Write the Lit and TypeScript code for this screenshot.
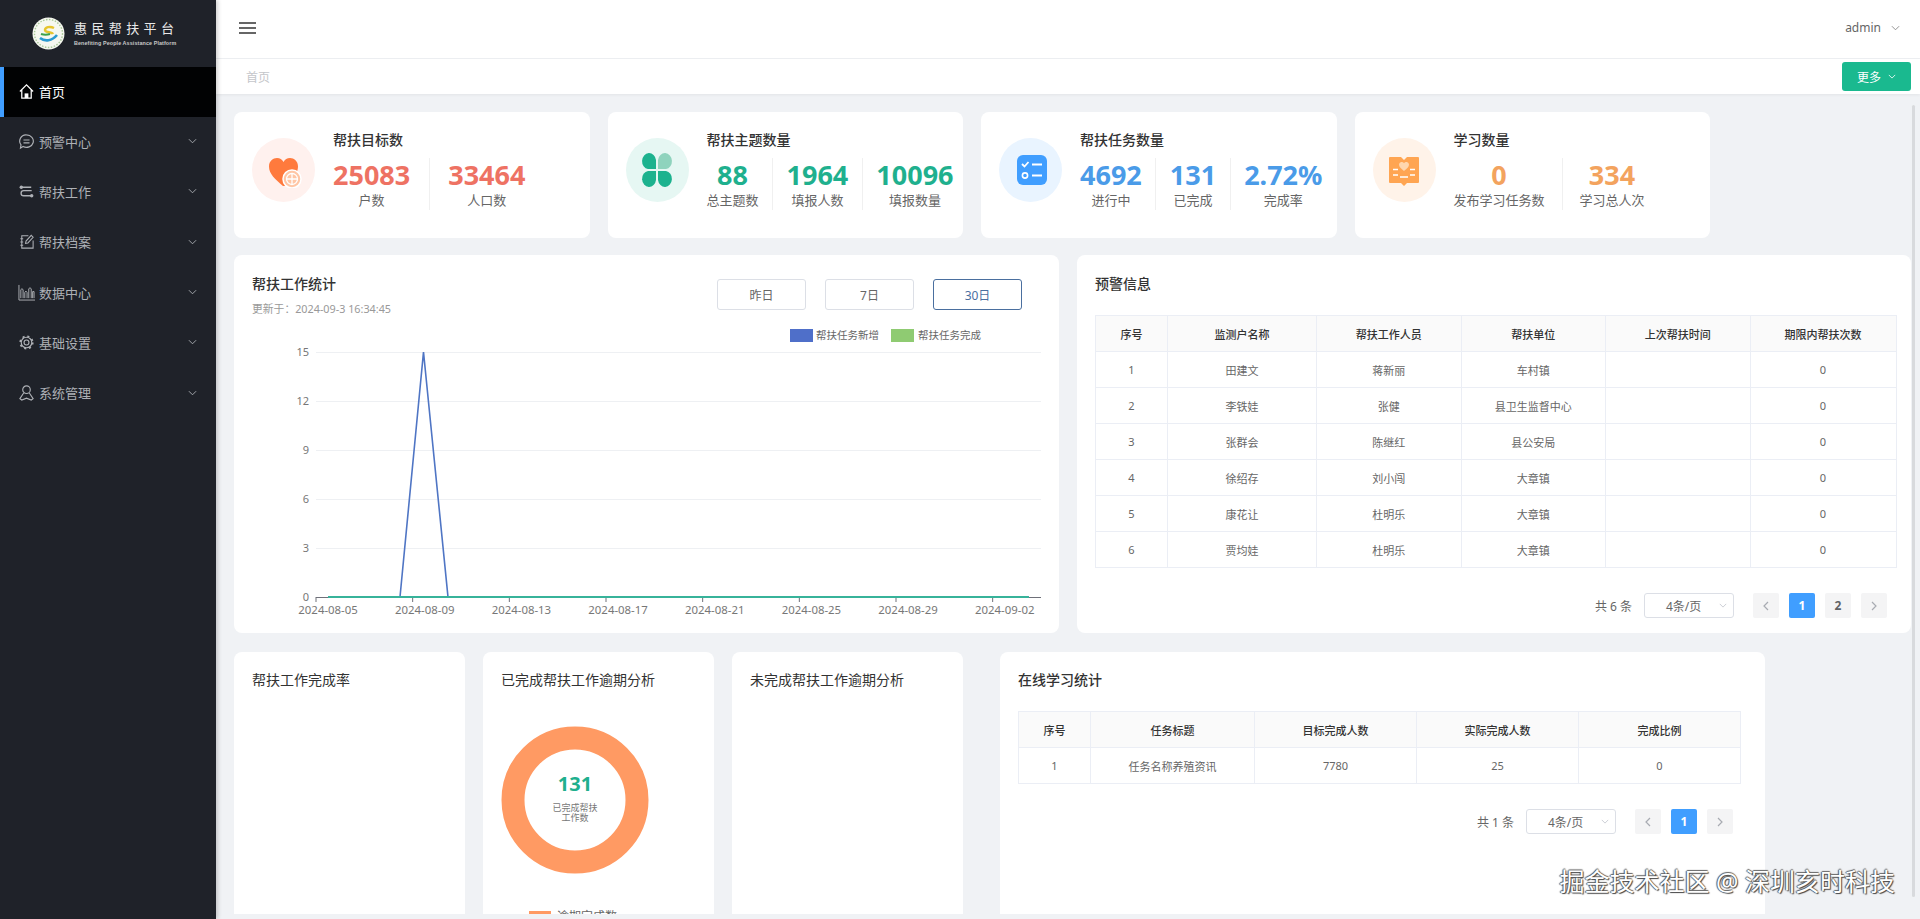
import { LitElement, css, html, svg } from 'lit';
import { customElement } from 'lit/decorators.js';

const chevron = html`<svg class="chev" viewBox="0 0 10 6"><path d="M1 1l4 4 4-4" fill="none" stroke="currentColor" stroke-width="1"/></svg>`;

const menuIcons: Record<string, unknown> = {
  home: svg`<path d="M2 9L9 2l7 7M4 7.500V16h10V7.500" fill="none" stroke="currentColor" stroke-width="1.300"/><rect x="7" y="11" width="4" height="5" fill="currentColor"/>`,
  chat: svg`<path d="M9 2a7.200 6.600 0 1 1-3.600 12.300L2.600 16l.6-3.400A6.600 6.600 0 0 1 9 2z" fill="none" stroke="currentColor" stroke-width="1.200"/><path d="M5.800 7.400h6.400M5.800 10.400h6.400" stroke="currentColor" stroke-width="1.200"/>`,
  flow: svg`<path d="M4 4.500h10M14.500 8H6a2.600 2.600 0 0 0 0 5.500h8" fill="none" stroke="currentColor" stroke-width="1.400"/><circle cx="3.500" cy="4.500" r="1.800" fill="currentColor"/><circle cx="14.500" cy="13.500" r="1.800" fill="currentColor"/>`,
  edit: svg`<path d="M11 3H4v13h12V8M2.500 6h3M2.500 9.500h3M2.500 13h3" fill="none" stroke="currentColor" stroke-width="1.100"/><path d="M8 11l.5-2.500L14 2.500l2 2-5.500 6z" fill="none" stroke="currentColor" stroke-width="1.100"/>`,
  bars: svg`<path d="M1 1v16h17" fill="none" stroke="currentColor" stroke-width="1"/><path d="M3 15V6q1.200-2 2.400 0v9M7.200 15V9q1.200-3 2.400 0v6M11.400 15V5q1.300-2 2.600 0v10M15.500 15V8h1.500v7" fill="none" stroke="currentColor" stroke-width="1"/>`,
  gear: svg`<circle cx="9" cy="9" r="2.600" fill="none" stroke="currentColor" stroke-width="1.200"/><circle cx="9" cy="9" r="5.600" fill="none" stroke="currentColor" stroke-width="1.200"/><circle cx="9" cy="9" r="6.600" fill="none" stroke="currentColor" stroke-width="1.800" stroke-dasharray="2.200 3"/>`,
  user: svg`<circle cx="9" cy="6" r="4" fill="none" stroke="currentColor" stroke-width="1.200"/><path d="M6 9.500L2 15.500l2 1.500 5-2 5 2 2-1.500-4-6" fill="none" stroke="currentColor" stroke-width="1.200"/>`,
};

const menu = [
  { icon: 'home', label: '首页', active: true },
  { icon: 'chat', label: '预警中心' },
  { icon: 'flow', label: '帮扶工作' },
  { icon: 'edit', label: '帮扶档案' },
  { icon: 'bars', label: '数据中心' },
  { icon: 'gear', label: '基础设置' },
  { icon: 'user', label: '系统管理' },
];

const statIcons: Record<string, unknown> = {
  heart: svg`<path d="M17 34C9 27 3 22 3 14.500 3 9 7 6 11 6c3 0 5 1.500 6.500 4C19 7.500 21 6 24 6c4 0 8 3 8 8.500 0 3-1 5-2 7L20 34z" fill="#ff7a3d"/><circle cx="26" cy="27" r="9" fill="#ffc6a5" stroke="#fff" stroke-width="1.500"/><circle cx="26" cy="27" r="5.500" fill="none" stroke="#fff" stroke-width="1.300"/><path d="M26 21.500v11M20.500 27h11" stroke="#fff" stroke-width="1.300"/>`,
  clover: svg`<path d="M17 17H9a7 8 0 1 1 8-9z" fill="#1cb28e"/><path d="M19 17h8a7 8 0 1 0-8-9z" fill="#8fd3bd"/><path d="M17 19H9a7 8 0 1 0 8 9z" fill="#1cb28e"/><path d="M19 19h8a7 8 0 1 1-8 9z" fill="#1cb28e"/>`,
  list: svg`<rect x="4" y="3" width="30" height="30" rx="6" fill="#409eff"/><path d="M9 12l2.500 2.500 4-4.500" fill="none" stroke="#fff" stroke-width="1.800"/><path d="M19 12.500h10M19 23.500h10" stroke="#fff" stroke-width="2"/><circle cx="12" cy="23.500" r="2.600" fill="none" stroke="#fff" stroke-width="1.600"/>`,
  book: svg`<path d="M4 5h11l3 3 3-3h11a1 1 0 0 1 1 1v24a1 1 0 0 1-1 1H21l-3 3-3-3H4a1 1 0 0 1-1-1V6a1 1 0 0 1 1-1z" fill="#ffa552"/><path d="M18 19c-3-2.500-5-4-5-6.500a2.700 2.700 0 0 1 5-1.300 2.700 2.700 0 0 1 5 1.300c0 2.500-2 4-5 6.500z" fill="#ffd7ae"/><path d="M7 17.500h5M7 23h5M24 17.500h5M24 23h5M14 25h8" stroke="#fff" stroke-width="1.600"/>`,
};

const stats = [
  { icon: 'heart', tint: 'red', title: '帮扶目标数', pad: 'p18', items: [['25083', '户数'], ['33464', '人口数']] },
  { icon: 'clover', tint: 'green', title: '帮扶主题数量', pad: 'p13', items: [['88', '总主题数'], ['1964', '填报人数'], ['10096', '填报数量']] },
  { icon: 'list', tint: 'blue', title: '帮扶任务数量', pad: 'p13', items: [['4692', '进行中'], ['131', '已完成'], ['2.72%', '完成率']] },
  { icon: 'book', tint: 'orange', title: '学习数量', pad: 'p17', items: [['0', '发布学习任务数'], ['334', '学习总人次']] },
];

const warnCols = [72, 149, 144.5, 144.5, 144.5, 146];
const warnHead = ['序号', '监测户名称', '帮扶工作人员', '帮扶单位', '上次帮扶时间', '期限内帮扶次数'];
const warnRows = [
  ['1', '田建文', '蒋新丽', '车村镇', '', '0'],
  ['2', '李铁娃', '张健', '县卫生监督中心', '', '0'],
  ['3', '张群会', '陈继红', '县公安局', '', '0'],
  ['4', '徐绍存', '刘小闯', '大章镇', '', '0'],
  ['5', '康花让', '杜明乐', '大章镇', '', '0'],
  ['6', '贾均娃', '杜明乐', '大章镇', '', '0'],
];

const studyCols = [72, 164, 162, 162, 162];
const studyHead = ['序号', '任务标题', '目标完成人数', '实际完成人数', '完成比例'];
const studyRows = [['1', '任务名称养殖资讯', '7780', '25', '0']];

const dates = ['2024-08-05', '2024-08-09', '2024-08-13', '2024-08-17', '2024-08-21', '2024-08-25', '2024-08-29', '2024-09-02'];

@customElement('app-root')
export class AppRoot extends LitElement {
  static styles = css`
    :host {
      display: block;
      width: 1920px;
      height: 919px;
      overflow: hidden;
      font-family: "Noto Sans", "Noto Sans CJK SC", sans-serif;
      font-size: 12px;
      color: #666;
      background: #f0f2f5;
    }
    .layout { display: flex; height: 919px; }

    .side { width: 216px; flex: none; background: #1f2229; box-shadow: 2px 0 4px rgba(0, 0, 0, .18); z-index: 2; }
    .logo { height: 67px; display: flex; align-items: center; padding-left: 32px; gap: 9px; box-sizing: border-box; }
    .logo svg { width: 33px; height: 33px; flex: none; }
    .logo_cn { color: #e8e8e8; font-size: 13px; line-height: 15px; letter-spacing: 4.4px; white-space: nowrap; }
    .logo_en { color: #c8c8c8; font-size: 5.4px; line-height: 8px; margin-top: 3px; white-space: nowrap; font-family: "Liberation Sans", sans-serif; font-weight: 700; letter-spacing: .1px; }
    .item { height: 50.3px; display: flex; align-items: center; padding: 0 0 2px 18px; color: #aeb1b6; font-size: 13px; box-sizing: border-box; }
    .item.active { background: #010203; color: #fff; border-left: 4px solid #409eff; padding-left: 14px; height: 50px; }
    .item svg.icon { width: 17px; height: 17px; margin-right: 4px; flex: none; }
    .item .chev { width: 9px; height: 6px; margin-left: auto; margin-right: 19px; }

    .main { flex: 1; display: flex; flex-direction: column; min-width: 0; position: relative; }
    .top { height: 55px; flex: none; background: #fff; border-bottom: 1px solid #eef0f3; display: flex; align-items: center; padding: 0 20px 3px 23px; box-sizing: content-box; }
    .burger { width: 17px; height: 12px; border-top: 2px solid #666; border-bottom: 2px solid #666; position: relative; box-sizing: border-box; }
    .burger::after { content: ''; position: absolute; left: 0; right: 0; top: 3px; height: 2px; background: #666; }
    .user { margin-left: auto; display: flex; align-items: center; gap: 10px; font-size: 12px; color: #666; }
    .user .chev { width: 9px; height: 6px; color: #888; }
    .crumbs { height: 35px; flex: none; background: #fff; box-shadow: 0 1px 3px rgba(0, 0, 0, .06); display: flex; align-items: center; padding: 0 9px 0 30px; color: #c4c6ca; z-index: 1; box-sizing: border-box; }
    .more { margin-left: auto; width: 69px; height: 29px; background: #1ab98f; color: #fff; border-radius: 3px; display: flex; align-items: center; justify-content: center; gap: 7px; font-size: 12px; }
    .more .chev { width: 8px; height: 5px; }

    .content { height: 820px; flex: none; overflow: hidden; padding: 18px 0 0 18px; box-sizing: border-box; display: flex; flex-direction: column; gap: 17px; }
    .row { display: flex; gap: 18px; flex: none; }
    .card { background: #fff; border-radius: 8px; flex: none; box-sizing: border-box; }

    .stat { width: 355.5px; height: 126px; display: flex; padding: 18px 0 0 18px; }
    .stat_icon { width: 63px; height: 64px; border-radius: 50%; flex: none; margin: 8px 18px 0 0; display: flex; align-items: center; justify-content: center; }
    .stat_icon svg { width: 36px; height: 36px; }
    .red { background: #fff1ee; }
    .green { background: #e6f7f3; }
    .blue { background: #e9f4ff; }
    .orange { background: #fff3e9; }
    .stat_title { font-size: 14px; font-weight: 500; line-height: 20px; color: #333; }
    .nums { display: flex; margin-top: 8px; }
    .num_col { display: flex; flex-direction: column; align-items: center; height: 52px; border-right: 1px solid #f0f0f0; }
    .num_col:first-child { padding-left: 0 !important; }
    .num_col:last-child { border-right: 0; }
    .p18 .num_col { padding: 0 18.5px; }
    .p13 .num_col { padding: 0 13.5px; }
    .p17 .num_col { padding: 0 17px; }
    .num { font-size: 27px; line-height: 34px; font-weight: 700; }
    .num.c-red { color: #ee7263; }
    .num.c-green { color: #1fb08e; }
    .num.c-blue { color: #4a9be8; }
    .num.c-orange { color: #f3a35e; }
    .num_label { font-size: 13px; line-height: 16px; color: #666; white-space: nowrap; }

    .chart { width: 825px; height: 378px; padding: 0; }
    .chart_head { display: flex; height: 65px; padding: 19px 37px 0 18px; box-sizing: border-box; }
    .card_title { font-size: 14px; font-weight: 500; color: #333; line-height: 20px; }
    .updated { font-size: 10.8px; color: #999; margin-top: 8px; line-height: 14px; }
    .ranges { margin-left: auto; display: flex; gap: 19px; margin-top: 5px; }
    .range { width: 89px; height: 31px; border: 1px solid #dcdfe6; border-radius: 3px; display: flex; align-items: center; justify-content: center; font-size: 12px; color: #666; box-sizing: border-box; }
    .range.on { border-color: #4a6f9f; color: #4a6f9f; }
    .chart svg { display: block; width: 825px; height: 305px; }
    .chart svg text { font-family: "Noto Sans", "Noto Sans CJK SC", sans-serif; }

    .warn { width: 834px; height: 378px; padding: 19px 16px 0 18px; }
    .table_title { font-size: 14px; font-weight: 500; color: #333; line-height: 20px; margin-bottom: 21px; }
    .table { display: grid; border: 1px solid #ebeef5; border-width: 1px 0 0 1px; width: max-content; font-size: 11px; }
    .cell { height: 36px; display: flex; align-items: center; justify-content: center; border: 1px solid #ebeef5; border-width: 0 1px 1px 0; box-sizing: border-box; color: #666; }
    .cell.head { background: #fafafa; color: #333; font-weight: 500; }
    .pager { display: flex; align-items: center; justify-content: flex-end; margin-top: 25px; padding-right: 8px; height: 25px; font-size: 12px; color: #666; }
    .total { margin-right: 12px; }
    .size { width: 90px; height: 25px; border: 1px solid #dcdfe6; border-radius: 3px; display: flex; align-items: center; padding: 0 6px 0 21px; box-sizing: border-box; margin-right: 19px; }
    .size .chev { width: 8px; height: 5px; margin-left: auto; color: #c0c4cc; }
    .pg { width: 26px; height: 25px; background: #f4f4f5; border-radius: 2px; margin-left: 10px; display: flex; align-items: center; justify-content: center; font-weight: 700; color: #606266; }
    .size + .pg { margin-left: 0; }
    .pg.on { background: #409eff; color: #fff; }
    .pg svg { width: 6px; height: 10px; color: #a8abb2; }

    .bottom { height: 300px; margin-top: 2px; }
    .mini { width: 231px; height: 300px; padding: 18px 0 0 18px; }
    .mini_title { font-size: 14px; line-height: 20px; color: #333; }
    .donut_gap { height: 18px; }
    .mini svg { display: block; width: 190px; height: 230px; margin-left: -2px; }
    .mini svg text { font-family: "Noto Sans", "Noto Sans CJK SC", sans-serif; }
    .study { width: 765px; height: 300px; padding: 18px 24px 0 18px; margin-left: 19px; }
    .study .pager { margin-top: 25px; padding-right: 8px; }

    .scroll { position: absolute; right: 5px; top: 105px; width: 3px; height: 792px; background: #d8dadd; border-radius: 2px; }
    .mark { position: absolute; right: 25px; bottom: 24px; font-size: 25px; line-height: 28px; color: #fff; white-space: nowrap; text-shadow: 1px 1px 1px #444, -1px 0 1px #555, 0 -1px 1px #666; z-index: 3; }
  `;

  private renderTable(cols: number[], head: string[], rows: string[][]) {
    const tpl = cols.map((w) => `${w}px`).join(' ');
    return html`<div class="table" style="grid-template-columns:${tpl}">
      ${head.map((h) => html`<div class="cell head">${h}</div>`)}
      ${rows.map((r) => r.map((c) => html`<div class="cell">${c}</div>`))}
    </div>`;
  }

  private renderPager(total: number, pages: number[]) {
    const left = svg`<path d="M5 1L1 5l4 4" fill="none" stroke="currentColor" stroke-width="1.200"/>`;
    const right = svg`<path d="M1 1l4 4-4 4" fill="none" stroke="currentColor" stroke-width="1.200"/>`;
    return html`<div class="pager">
      <span class="total">共 ${total} 条</span>
      <div class="size">4条/页 ${chevron}</div>
      <div class="pg"><svg viewBox="0 0 6 10">${left}</svg></div>
      ${pages.map((p) => html`<div class="pg ${p === 1 ? 'on' : ''}">${p}</div>`)}
      <div class="pg"><svg viewBox="0 0 6 10">${right}</svg></div>
    </div>`;
  }

  private renderLineChart() {
    const x0 = 82;
    const x1 = 807;
    const ys = [277, 228, 179, 130, 81, 32];
    const band = (x1 - x0) / 30;
    return html`<svg viewBox="0 0 825 305">
      <rect x="556" y="9" width="23" height="13" fill="#4f6fc9"/>
      <text x="582" y="19" font-size="10.500" fill="#666">帮扶任务新增</text>
      <rect x="657" y="9" width="23" height="13" fill="#8fcb72"/>
      <text x="684" y="19" font-size="10.500" fill="#666">帮扶任务完成</text>
      ${ys.slice(1).map((y) => svg`<line x1="${x0}" x2="${x1}" y1="${y + 0.5}" y2="${y + 0.5}" stroke="#eef0f3"/>`)}
      ${ys.map((y, i) => svg`<text x="75" y="${y + 4}" font-size="11" fill="#777" text-anchor="end">${i * 3}</text>`)}
      <line x1="${x0}" x2="${x1}" y1="277.500" y2="277.500" stroke="#6e7079"/>
      ${dates.map((d, i) => {
        const tick = x0 + i * 4 * band;
        return svg`<line x1="${tick}" x2="${tick}" y1="277" y2="282" stroke="#6e7079"/>
          <text x="${tick + band / 2}" y="294" font-size="11.400" fill="#777" text-anchor="middle">${d}</text>`;
      })}
      <polyline points="${x0 + band / 2},277 166,277 189.500,32 214,277 ${x0 + band * 29.5},277" fill="none" stroke="#4f75c4" stroke-width="1.600"/>
      <line x1="${x0 + band / 2}" x2="${x0 + band * 29.5}" y1="277" y2="277" stroke="#37b39a" stroke-width="2"/>
    </svg>`;
  }

  private renderDonut() {
    return html`<svg viewBox="0 0 190 230">
      <circle cx="76" cy="92" r="62" fill="none" stroke="#ff9a63" stroke-width="23"/>
      <text x="76" y="83" font-size="20" font-weight="700" fill="#1fb08e" text-anchor="middle">131</text>
      <text x="76" y="103" font-size="9" fill="#777" text-anchor="middle">已完成帮扶</text>
      <text x="76" y="113" font-size="9" fill="#777" text-anchor="middle">工作数</text>
      <rect x="30" y="203" width="22" height="13" fill="#ff9a63"/>
      <text x="58" y="213" font-size="12" fill="#666">逾期完成数</text>
    </svg>`;
  }

  render() {
    return html`<div class="layout">
      <aside class="side">
        <div class="logo">
          <svg viewBox="0 0 33 33">
            <circle cx="16.500" cy="16.500" r="16" fill="#f6f8f0"/>
            <circle cx="16.500" cy="16.500" r="14" fill="none" stroke="#a9c998" stroke-width="1.400" stroke-dasharray="1.500 1.500"/>
            <path d="M22 11c-4-2-9-1-9 2s7 1.500 8 4" fill="none" stroke="#e6c42e" stroke-width="2.400"/>
            <path d="M8 21c5 4 12 3 17-3" fill="none" stroke="#2a9ad0" stroke-width="2.600"/>
            <path d="M9 17c3 1 6 1 9 0" fill="none" stroke="#3da24a" stroke-width="2.200"/>
          </svg>
          <div>
            <div class="logo_cn">惠民帮扶平台</div>
            <div class="logo_en">Benefiting People Assistance Platform</div>
          </div>
        </div>
        ${menu.map((m) => html`<div class="item ${m.active ? 'active' : ''}">
          <svg class="icon" viewBox="0 0 18 18">${menuIcons[m.icon]}</svg>
          <span>${m.label}</span>
          ${m.active ? '' : chevron}
        </div>`)}
      </aside>
      <div class="main">
        <header class="top">
          <div class="burger"></div>
          <div class="user">admin ${chevron}</div>
        </header>
        <div class="crumbs">首页<div class="more">更多 ${chevron}</div></div>
        <div class="content">
          <div class="row">
            ${stats.map((s) => html`<div class="card stat">
              <div class="stat_icon ${s.tint}"><svg viewBox="0 0 36 36">${statIcons[s.icon]}</svg></div>
              <div class="${s.pad}">
                <div class="stat_title">${s.title}</div>
                <div class="nums">
                  ${s.items.map(([n, l]) => html`<div class="num_col">
                    <div class="num c-${s.tint}">${n}</div>
                    <div class="num_label">${l}</div>
                  </div>`)}
                </div>
              </div>
            </div>`)}
          </div>
          <div class="row">
            <div class="card chart">
              <div class="chart_head">
                <div>
                  <div class="card_title">帮扶工作统计</div>
                  <div class="updated">更新于：2024-09-3 16:34:45</div>
                </div>
                <div class="ranges">
                  <div class="range">昨日</div>
                  <div class="range">7日</div>
                  <div class="range on">30日</div>
                </div>
              </div>
              ${this.renderLineChart()}
            </div>
            <div class="card warn">
              <div class="table_title">预警信息</div>
              ${this.renderTable(warnCols, warnHead, warnRows)}
              ${this.renderPager(6, [1, 2])}
            </div>
          </div>
          <div class="row bottom">
            <div class="card mini"><div class="mini_title">帮扶工作完成率</div></div>
            <div class="card mini">
              <div class="mini_title">已完成帮扶工作逾期分析</div>
              <div class="donut_gap"></div>
              ${this.renderDonut()}
            </div>
            <div class="card mini"><div class="mini_title">未完成帮扶工作逾期分析</div></div>
            <div class="card study">
              <div class="table_title">在线学习统计</div>
              ${this.renderTable(studyCols, studyHead, studyRows)}
              ${this.renderPager(1, [1])}
            </div>
          </div>
        </div>
        <div class="scroll"></div>
        <div class="mark">掘金技术社区 @ 深圳亥时科技</div>
      </div>
    </div>`;
  }
}
